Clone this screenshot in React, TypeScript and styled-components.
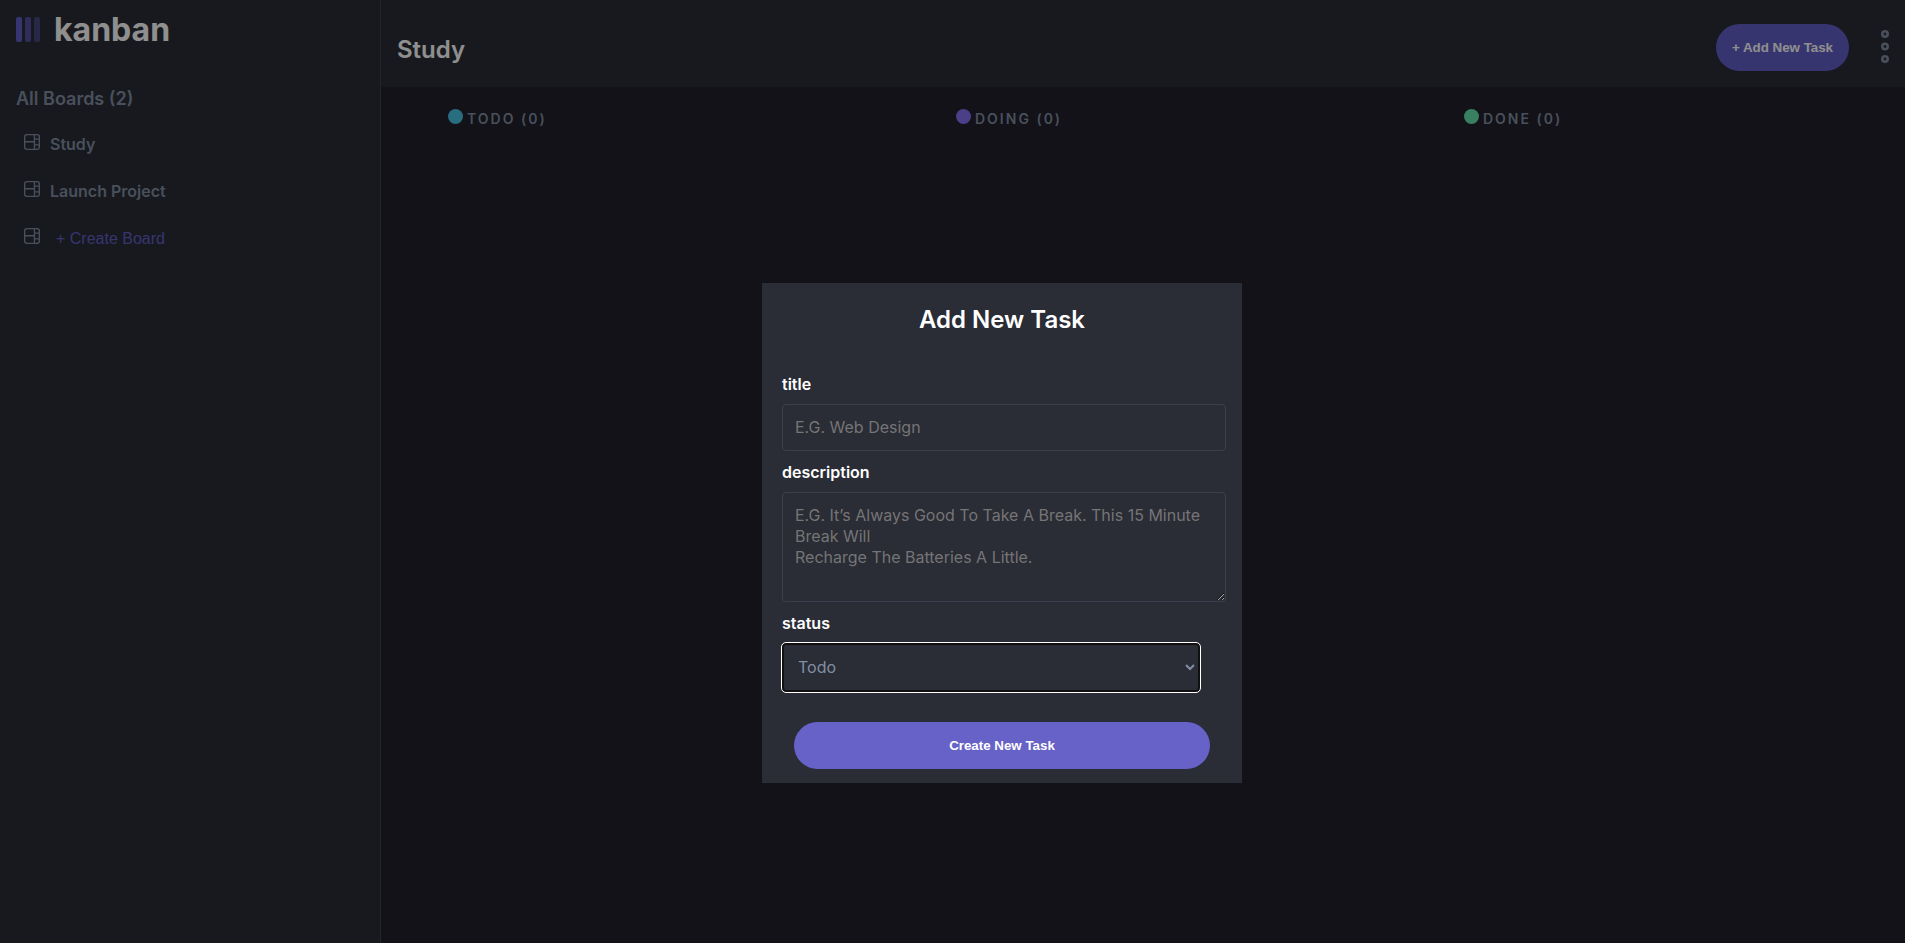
import React from "react";
import styled, { createGlobalStyle } from "styled-components";

const GlobalStyle = createGlobalStyle`
  *, *::before, *::after { box-sizing: border-box; }
  body {
    margin: 0;
    background: #20212c;
    color: #fff;
    font-family: Inter, "Liberation Sans", sans-serif;
    font-size: 16px;
    line-height: 20px;
  }
  h1, h2, h3, ul { margin: 0; padding: 0; }
`;

const Page = styled.div`
  display: grid;
  grid-template-columns: 20% 1fr;
  min-height: 100vh;
`;

const Sidebar = styled.aside`
  padding: 8px 16px;
  background: #2a2d36;
  border-right: 1px solid #3e3f4e;
`;

const Logo = styled.a`
  display: flex;
  align-items: center;
  gap: 14px;
  height: 43px;
  color: #fff;
  font-size: 32px;
  font-weight: 700;
  line-height: 43px;
  text-decoration: none;
`;

const BoardsHeading = styled.h2`
  margin-top: 36px;
  color: #828fa3;
  font-size: 18px;
  font-weight: 600;
  line-height: 24px;
`;

const BoardList = styled.ul`
  display: flex;
  flex-direction: column;
  gap: 23px;
  margin-top: 23px;
  padding: 0 8px;
  list-style: none;
`;

const BoardItem = styled.li`
  display: flex;
  align-items: flex-start;
  gap: 10px;
  height: 24px;
  color: #828fa3;
`;

const BoardLink = styled.a`
  color: inherit;
  font-weight: 600;
  line-height: 20px;
  text-decoration: none;
`;

const CreateBoard = styled.button`
  padding: 0 6px;
  border: 0;
  background: none;
  color: #635fc7;
  font: 16px/22px "Liberation Sans", Arial, sans-serif;
`;

const Main = styled.main`
  min-width: 0;
`;

const Header = styled.header`
  display: flex;
  align-items: center;
  justify-content: space-between;
  height: 87px;
  padding: 8px 16px;
  background: #2a2d36;
`;

const BoardTitle = styled.h1`
  padding-top: 12px;
  font-size: 24px;
  font-weight: 600;
  line-height: 32px;
`;

const HeaderActions = styled.div`
  display: flex;
  align-items: center;
  gap: 32px;
  padding-top: 8px;
`;

const PillButton = styled.button`
  width: 133px;
  height: 47px;
  padding: 0;
  border: 0;
  border-radius: 24px;
  background: #635fc7;
  color: #fff;
  font-family: "Liberation Sans", Arial, sans-serif;
  font-weight: bold;
`;

const SubmitButton = styled(PillButton)`
  width: auto;
  margin: 19px 16px 0 12px;
  background: #6662c7;
`;

const MenuButton = styled.button`
  display: flex;
  padding: 0;
  border: 0;
  background: none;
  color: #828fa3;
`;

const Columns = styled.div`
  display: grid;
  grid-template-columns: repeat(3, 1fr);
`;

const Column = styled.section`
  display: flex;
  gap: 4px;
  padding: 22px 16px 0 67px;
`;

const Dot = styled.span<{ $color: string }>`
  width: 15px;
  height: 15px;
  border-radius: 50%;
  background: ${(p) => p.$color};
`;

const ColumnTitle = styled.h3`
  padding-top: 1px;
  color: #828fa3;
  font-size: 14px;
  font-weight: 600;
  letter-spacing: 2px;
  line-height: 18px;
`;

const Overlay = styled.div`
  position: fixed;
  inset: 0;
  background: rgba(0, 0, 0, 0.44);
`;

const Dialog = styled.form`
  position: fixed;
  top: 30%;
  left: 40%;
  display: flex;
  flex-direction: column;
  width: 480px;
  padding: 21px 16px 14px 20px;
  background: #2a2c36;
`;

const DialogTitle = styled.h2`
  margin-bottom: 38px;
  padding-right: 4px;
  font-size: 24px;
  font-weight: 600;
  line-height: 32px;
  text-align: center;
`;

const Field = styled.div`
  display: flex;
  flex-direction: column;
  gap: 10px;
  margin-bottom: 11px;
`;

const Label = styled.label`
  font-weight: 600;
  line-height: 20px;
`;

const TextInput = styled.input`
  width: 444px;
  height: 47px;
  padding: 12px;
  border: 1px solid #3e3f4e;
  border-radius: 4px;
  background: transparent;
  color: #fff;
  font: 16px/21px Inter, "Liberation Sans", sans-serif;

  &::placeholder {
    color: #757575;
  }
`;

const TextArea = styled(TextInput).attrs({ as: "textarea" })`
  display: block;
  height: 110px;
`;

const Select = styled.select`
  width: 418px;
  height: 49px;
  padding: 10px;
  border: 2px solid #101010;
  border-radius: 4px;
  outline: 1px solid #fff;
  background: #2a2c36;
  color: #828fa3;
  font: 16px/21px Inter, "Liberation Sans", sans-serif;
`;

const BoardIcon = () => (
  <svg width="16" height="16" viewBox="0 0 16 16" aria-hidden="true">
    <path
      fill="currentColor"
      d="M0 2.889A2.889 2.889 0 0 1 2.889 0H13.11A2.889 2.889 0 0 1 16 2.889V13.11A2.888 2.888 0 0 1 13.111 16H2.89A2.889 2.889 0 0 1 0 13.111V2.89Zm1.333 5.555v4.667c0 .859.697 1.556 1.556 1.556h6.889V8.444H1.333Zm8.445-1.333V1.333h-6.89A1.556 1.556 0 0 0 1.334 2.89V7.11h8.445Zm4.889-1.333H11.11v4.444h3.556V5.778Zm0 5.778H11.11v3.11h2a1.556 1.556 0 0 0 1.556-1.555v-1.555Zm0-7.112V2.89a1.555 1.555 0 0 0-1.556-1.556h-2v3.111h3.556Z"
    />
  </svg>
);

const boards = ["Study", "Launch Project"];
const columns = [
  { name: "TODO", color: "#49c4e5" },
  { name: "DOING", color: "#8471f2" },
  { name: "DONE", color: "#67e2ae" },
];

export default function App() {
  return (
    <>
      <GlobalStyle />
      <Page>
        <Sidebar>
          <Logo href="#">
            <svg width="24" height="25" viewBox="0 0 24 25" fill="#635fc7" aria-hidden="true">
              <rect width="6" height="25" rx="2" />
              <rect x="9" width="6" height="25" rx="2" opacity=".75" />
              <rect x="18" width="6" height="25" rx="2" opacity=".5" />
            </svg>
            kanban
          </Logo>
          <BoardsHeading>All Boards (2)</BoardsHeading>
          <BoardList>
            {boards.map((name) => (
              <BoardItem key={name}>
                <BoardIcon />
                <BoardLink href="#">{name}</BoardLink>
              </BoardItem>
            ))}
            <BoardItem>
              <BoardIcon />
              <CreateBoard type="button">+ Create Board</CreateBoard>
            </BoardItem>
          </BoardList>
        </Sidebar>
        <Main>
          <Header>
            <BoardTitle>Study</BoardTitle>
            <HeaderActions>
              <PillButton type="button">+ Add New Task</PillButton>
              <MenuButton type="button" aria-label="Board menu">
                <svg width="8" height="36" viewBox="0 0 8 36" fill="none" stroke="currentColor" strokeWidth="2.6">
                  <circle cx="4" cy="4" r="2.7" />
                  <circle cx="4" cy="16.5" r="2.7" />
                  <circle cx="4" cy="29" r="2.7" />
                </svg>
              </MenuButton>
            </HeaderActions>
          </Header>
          <Columns>
            {columns.map((c) => (
              <Column key={c.name}>
                <Dot $color={c.color} />
                <ColumnTitle>{c.name} (0)</ColumnTitle>
              </Column>
            ))}
          </Columns>
        </Main>
      </Page>
      <Overlay />
      <Dialog role="dialog" aria-labelledby="dialog-title">
        <DialogTitle id="dialog-title">Add New Task</DialogTitle>
        <Field>
          <Label htmlFor="title">title</Label>
          <TextInput id="title" placeholder="E.G. Web Design" />
        </Field>
        <Field>
          <Label htmlFor="description">description</Label>
          <TextArea
            id="description"
            placeholder={"E.G. It’s Always Good To Take A Break. This 15 Minute Break Will\nRecharge The Batteries A Little."}
          />
        </Field>
        <Field>
          <Label htmlFor="status">status</Label>
          <Select id="status" defaultValue="Todo">
            <option>Todo</option>
            <option>Doing</option>
            <option>Done</option>
          </Select>
        </Field>
        <SubmitButton type="submit">Create New Task</SubmitButton>
      </Dialog>
    </>
  );
}
